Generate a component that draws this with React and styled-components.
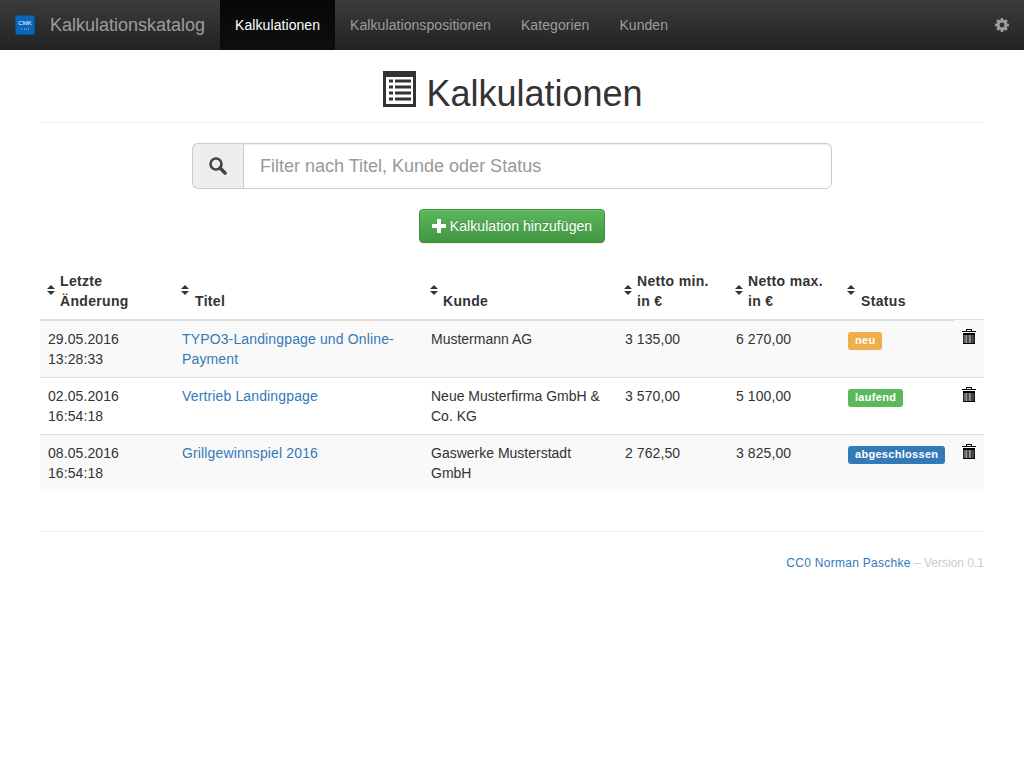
import React from 'react';
import styled, { createGlobalStyle } from 'styled-components';

const GlobalStyle = createGlobalStyle`
  html, body {
    margin: 0;
    padding: 0;
    background: #fff;
    color: #333;
    font-family: "Liberation Sans", Arial, sans-serif;
    font-size: 14px;
    line-height: 20px;
  }
  * {
    box-sizing: border-box;
  }
`;

const rows = [
  {
    date: '29.05.2016',
    time: '13:28:33',
    title: 'TYPO3-Landingpage und Online-Payment',
    customer: 'Mustermann AG',
    min: '3 135,00',
    max: '6 270,00',
    status: 'neu',
    color: '#f0ad4e',
  },
  {
    date: '02.05.2016',
    time: '16:54:18',
    title: 'Vertrieb Landingpage',
    customer: 'Neue Musterfirma GmbH & Co. KG',
    min: '3 570,00',
    max: '5 100,00',
    status: 'laufend',
    color: '#5cb85c',
  },
  {
    date: '08.05.2016',
    time: '16:54:18',
    title: 'Grillgewinnspiel 2016',
    customer: 'Gaswerke Musterstadt GmbH',
    min: '2 762,50',
    max: '3 825,00',
    status: 'abgeschlossen',
    color: '#337ab7',
  },
];

const columns = [
  { width: 134, slot: 13, label: <>Letzte<br />Änderung</> },
  { width: 249, slot: 14, label: 'Titel' },
  { width: 194, slot: 13, label: 'Kunde' },
  { width: 111, slot: 13, label: <>Netto min.<br />in €</> },
  { width: 112, slot: 13, label: <>Netto max.<br />in €</> },
  { width: 114, slot: 14, label: 'Status' },
];

// the stripes of the trash can, one pixel each, left to right
const trashStripes = ['#9a5510', '#4f9bdc', '#5a9fd8', '#e4e4e4', '#222', '#c8742c', '#e4e4e4', '#6aa6dc', '#222', '#c8742c', '#1b3d7a'];

function LogoIcon() {
  return (
    <svg width="20" height="20" viewBox="0 0 20 20">
      <rect x="0.5" y="0.5" width="19" height="19" rx="2" fill="#0a66b8" stroke="#08508f" />
      <text x="10" y="10" textAnchor="middle" fontSize="6" fontFamily="Liberation Sans" fill="#fff">CMK</text>
      <path d="M6 13.5h1v1H6z M9 13.5h1v1H9z M11 13.5h1v1h-1z M13 13.5h1v1h-1z" fill="#9cc4e8" />
    </svg>
  );
}

function ListIcon() {
  return (
    <svg width="33" height="36" viewBox="0 0 33 36">
      <rect width="33" height="36" fill="#333" />
      <rect x="3" y="6" width="27" height="27" fill="#fff" />
      {[8.5, 14.5, 20.5, 26.5].map((y) => (
        <g key={y} fill="#333">
          <rect x="6" y={y} width="4" height="3" />
          <rect x="12" y={y} width="16" height="3" />
        </g>
      ))}
    </svg>
  );
}

function SearchIcon() {
  return (
    <svg width="18" height="18" viewBox="0 0 18 18" fill="none">
      <circle cx="7" cy="7" r="5.5" stroke="#444" strokeWidth="2.6" />
      <path d="M11 11 L16 16" stroke="#444" strokeWidth="3.6" strokeLinecap="round" />
    </svg>
  );
}

function PlusIcon() {
  return (
    <svg width="14" height="14" viewBox="0 0 14 14">
      <path d="M5 0h4v5h5v4H9v5H5V9H0V5h5z" fill="#fff" />
    </svg>
  );
}

function SortIcon() {
  return (
    <svg width="8" height="10" viewBox="0 0 8 10">
      <path d="M4 0 L8 4 H0 Z M4 10 L0 6 H8 Z" fill="#333" />
    </svg>
  );
}

function TrashIcon() {
  return (
    <svg width="14" height="15" viewBox="0 0 14 15">
      <path d="M0 2h14v1H0z M4 0h6v2H9V1H5v1H4z" fill="#000" />
      <path d="M1 4h12v11H1z" fill="#000" />
      {trashStripes.map((color, i) => (
        <rect key={i} x={1.5 + i} y="6" width="1" height="8" fill={color} />
      ))}
    </svg>
  );
}

function CogIcon() {
  return (
    <svg width="14" height="14" viewBox="0 0 14 14">
      <path
        fillRule="evenodd"
        d="M5.8 0h2.4l.3 1.9 1 .4L11 1.2l1.8 1.8-1.1 1.5.4 1L14 5.8v2.4l-1.9.3-.4 1 1.1 1.5-1.8 1.8-1.5-1.1-1 .4-.3 1.9H5.8l-.3-1.9-1-.4L3 12.8 1.2 11l1.1-1.5-.4-1L0 8.2V5.8l1.9-.3.4-1L1.2 3 3 1.2l1.5 1.1 1-.4zM7 4.6a2.4 2.4 0 1 0 0 4.8 2.4 2.4 0 0 0 0-4.8z"
        fill="#9d9d9d"
      />
    </svg>
  );
}

function App() {
  return (
    <>
      <GlobalStyle />
      <NavBar>
        <Brand>
          <LogoIcon />
          <BrandName>Kalkulationskatalog</BrandName>
        </Brand>
        <NavItem $active>Kalkulationen</NavItem>
        <NavItem>Kalkulationspositionen</NavItem>
        <NavItem>Kategorien</NavItem>
        <NavItem>Kunden</NavItem>
        <Settings><CogIcon /></Settings>
      </NavBar>
      <Container>
        <PageHeader>
          <ListIcon />
          <PageTitle>Kalkulationen</PageTitle>
        </PageHeader>
        <SearchGroup>
          <SearchAddon><SearchIcon /></SearchAddon>
          <SearchInput placeholder="Filter nach Titel, Kunde oder Status" />
        </SearchGroup>
        <ButtonRow>
          <AddButton><PlusIcon />Kalkulation hinzufügen</AddButton>
        </ButtonRow>
        <Table>
          <thead>
            <tr>
              {columns.map((col, i) => (
                <HeadCell key={i} $width={col.width}>
                  <SortLabel>
                    <SortSlot $width={col.slot}><SortIcon /></SortSlot>
                    <span>{col.label}</span>
                  </SortLabel>
                </HeadCell>
              ))}
              <LastHeadCell />
            </tr>
          </thead>
          <tbody>
            {rows.map((row, i) => (
              <Row key={row.date}>
                <Cell>{row.date}<br />{row.time}</Cell>
                <Cell><TitleLink>{row.title}</TitleLink></Cell>
                <CustomerCell>{row.customer}</CustomerCell>
                <Cell>{row.min}</Cell>
                <Cell>{row.max}</Cell>
                <Cell><StatusLabel $color={row.color}>{row.status}</StatusLabel></Cell>
                <Cell><TrashButton $lower={i > 0}><TrashIcon /></TrashButton></Cell>
              </Row>
            ))}
          </tbody>
        </Table>
        <Footer>
          <FooterLink>CC0 Norman Paschke</FooterLink>
          <FooterMuted> – Version 0.1</FooterMuted>
        </Footer>
      </Container>
    </>
  );
}

const NavBar = styled.nav`
  display: flex;
  height: 50px;
  background: linear-gradient(to bottom, #3c3c3c 0%, #222 100%);
`;

const Brand = styled.div`
  display: flex;
  align-items: center;
  padding: 0 15px;
`;

const BrandName = styled.span`
  margin-left: 15px;
  font-size: 18px;
  color: #9d9d9d;
`;

const NavItem = styled.a`
  display: block;
  padding: 15px;
  letter-spacing: 0.07px;
  color: ${(p) => (p.$active ? '#fff' : '#9d9d9d')};
  background: ${(p) => (p.$active ? 'linear-gradient(to bottom, #080808 0%, #0f0f0f 100%)' : 'none')};
  box-shadow: ${(p) => (p.$active ? 'inset 0 3px 9px rgba(0, 0, 0, 0.25)' : 'none')};
`;

const Settings = styled.div`
  display: flex;
  align-items: center;
  margin-left: auto;
  padding-right: 15px;
`;

const Container = styled.main`
  padding: 0 40px;
`;

const PageHeader = styled.header`
  display: flex;
  justify-content: center;
  align-items: flex-start;
  gap: 10px;
  height: 73px;
  padding: 21px 0 0 2px;
  border-bottom: 1px solid #eee;
`;

const PageTitle = styled.h1`
  margin: 1px 0 0;
  font-size: 36px;
  font-weight: 500;
  line-height: 44px;
`;

const SearchGroup = styled.div`
  display: flex;
  width: 640px;
  height: 46px;
  margin: 20px auto 0;
`;

const SearchAddon = styled.span`
  display: flex;
  justify-content: center;
  align-items: center;
  width: 51px;
  background: #eee;
  border: 1px solid #ccc;
  border-right: 0;
  border-radius: 6px 0 0 6px;
`;

const SearchInput = styled.input`
  flex: 1;
  padding: 10px 16px;
  border: 1px solid #ccc;
  border-radius: 0 6px 6px 0;
  box-shadow: inset 0 1px 1px rgba(0, 0, 0, 0.075);
  font-family: inherit;
  font-size: 18px;
  color: #555;
  outline: none;

  &::placeholder {
    color: #999;
    opacity: 1;
  }
`;

const ButtonRow = styled.div`
  display: flex;
  justify-content: center;
  margin-top: 20px;
`;

const AddButton = styled.button`
  display: flex;
  align-items: center;
  gap: 4px;
  height: 34px;
  padding: 6px 12px;
  border: 1px solid #3e8f3e;
  border-radius: 4px;
  background: linear-gradient(to bottom, #5cb85c 0%, #419641 100%);
  box-shadow: inset 0 1px 0 rgba(255, 255, 255, 0.15), 0 1px 1px rgba(0, 0, 0, 0.075);
  color: #fff;
  font-family: inherit;
  font-size: 14px;
  letter-spacing: 0.07px;
  text-shadow: 0 -1px 0 rgba(0, 0, 0, 0.2);
`;

const Table = styled.table`
  width: 100%;
  margin-top: 20px;
  border-collapse: separate;
  border-spacing: 0;
  table-layout: fixed;
`;

const HeadCell = styled.th`
  width: ${(p) => p.$width}px;
  padding: 8px 8px 8px 7px;
  border-bottom: 2px solid #ddd;
  text-align: left;
  vertical-align: bottom;
  font-weight: 700;
  letter-spacing: 0.33px;
`;

const LastHeadCell = styled.th`
  padding: 8px;
  border-bottom: 1px solid #f9f9f9;
  box-shadow: inset 0 -1px 0 #ddd;
`;

const SortLabel = styled.div`
  display: flex;
  align-items: flex-end;
`;

const SortSlot = styled.span`
  display: flex;
  flex: none;
  width: ${(p) => p.$width}px;
  margin-bottom: 16px;
`;

const Row = styled.tr`
  &:nth-child(odd) td {
    background: #f9f9f9;
  }
  &:not(:last-child) td {
    border-bottom: 1px solid #ddd;
  }
`;

const Cell = styled.td`
  padding: 8px;
  vertical-align: top;
  letter-spacing: 0.08px;
`;

const CustomerCell = styled(Cell)`
  letter-spacing: 0;
`;

const TitleLink = styled.a`
  color: #337ab7;
  letter-spacing: 0.14px;
`;

const StatusLabel = styled.span`
  padding: 2px 7px 3.5px;
  border-radius: 3px;
  background: ${(p) => p.$color};
  color: #fff;
  font-size: 11px;
  font-weight: 700;
  letter-spacing: 0.3px;
`;

const TrashButton = styled.span`
  display: flex;
  margin-top: ${(p) => (p.$lower ? '1px' : '0')};
`;

const Footer = styled.footer`
  margin-top: 40px;
  padding-top: 21px;
  border-top: 1px solid #eee;
  text-align: right;
  font-size: 12px;
`;

const FooterLink = styled.a`
  color: #337ab7;
  letter-spacing: 0.27px;
`;

const FooterMuted = styled.span`
  color: #ccc;
`;

export default App;
